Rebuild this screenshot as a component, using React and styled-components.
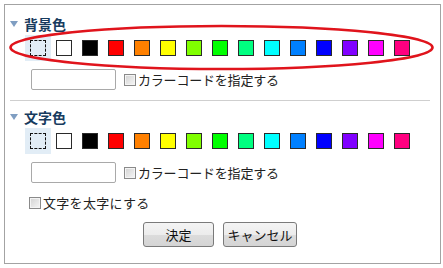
import React, { useState } from 'react';
import styled, { createGlobalStyle } from 'styled-components';

const GlobalStyle = createGlobalStyle`
  html, body {
    margin: 0;
    padding: 0;
    background: #fff;
  }
  * {
    box-sizing: border-box;
  }
  body {
    font-family: "Noto Sans CJK JP", "Noto Sans", sans-serif;
    color: #222;
  }
`;

const Page = styled.div`
  position: relative;
  width: 443px;
  height: 268px;
  padding: 4px 0 0 4px;
`;

const Frame = styled.div`
  width: 437px;
  height: 260px;
  border: 1px solid #a3a3a3;
  padding-top: 10px;
  display: flex;
  flex-direction: column;
`;

const Heading = styled.div`
  display: flex;
  align-items: center;
  gap: 6px;
  height: 18px;
  padding-left: 5px;
  font-size: 14px;
  font-weight: bold;
  line-height: 18px;
  color: #173b5e;
  margin-top: ${p => p.$top || 0}px;
`;

const Arrow = styled.span`
  width: 0;
  height: 0;
  border-left: 4px solid transparent;
  border-right: 4px solid transparent;
  border-top: 6px solid #7f9ec2;
`;

const SwatchRow = styled.div`
  display: flex;
  padding-left: 20px;
  margin-top: 2px;
`;

const Cell = styled.div`
  width: 26px;
  height: 26px;
  display: flex;
  align-items: center;
  justify-content: center;
  background: ${p => (p.$selected ? '#e2edf6' : 'transparent')};
  cursor: pointer;
`;

const Swatch = styled.span`
  width: 16px;
  height: 16px;
  background: ${p => p.$color || 'transparent'};
  border: 1px ${p => (p.$color ? 'solid' : 'dashed')} ${p => (p.$color ? '#2a2a2a' : '#111')};
`;

const CodeRow = styled.div`
  display: flex;
  align-items: center;
  gap: 8px;
  padding-left: 26px;
  margin-top: 8px;
  height: 21px;
`;

const CodeInput = styled.input`
  width: 85px;
  height: 21px;
  border: 1px solid #a9a9a9;
  border-radius: 2px;
  padding: 0 3px;
  font-size: 13px;
  outline: none;
`;

const Check = styled.label`
  display: flex;
  align-items: center;
  gap: 2px;
  font-size: 13px;
  letter-spacing: ${p => p.$tight ? '-0.2px' : '0.3px'};
  line-height: 18px;
  color: #222;
  cursor: pointer;
`;

const Box = styled.input.attrs({ type: 'checkbox' })`
  appearance: none;
  margin: 0;
  width: 12px;
  height: 12px;
  border: 1px solid #8a8a8a;
  background: linear-gradient(135deg, #d2d2d2 0%, #e6e6e6 55%, #f6f6f6 100%);
  box-shadow: inset 0 0 0 1px #f4f4f4;
  flex: none;
  &:checked {
    background: #fff;
  }
`;

const Divider = styled.div`
  height: 1px;
  background: #cfcfcf;
  margin: 10px 10px 0 5px;
`;

const BoldRow = styled.div`
  padding-left: 24px;
  margin-top: 11px;
  height: 18px;
  display: flex;
`;

const Buttons = styled.div`
  display: flex;
  justify-content: center;
  gap: 9px;
  margin-top: 10px;
  padding-right: 5px;
`;

const Button = styled.button`
  width: ${p => p.$w}px;
  height: 25px;
  border: 1px solid #7a7a7a;
  border-radius: 3px;
  background: linear-gradient(#f4f4f4 0%, #ececec 50%, #dcdcdc 51%, #d4d4d4 100%);
  font-family: "Noto Sans CJK JP", sans-serif;
  font-size: 13px;
  color: #111;
  padding: 0;
  cursor: pointer;
`;

const Mark = styled.svg`
  position: absolute;
  left: 0;
  top: 0;
  pointer-events: none;
`;

const COLORS = [
  null, '#ffffff', '#000000', '#ff0000', '#ff8000', '#ffff00', '#80ff00',
  '#00ff00', '#00ff80', '#00ffff', '#0080ff', '#0000ff', '#8000ff',
  '#ff00ff', '#ff0080',
];

function Palette({ value, onPick }) {
  return (
    <SwatchRow>
      {COLORS.map((c, i) => (
        <Cell key={i} $selected={value === i} onClick={() => onPick(i)}>
          <Swatch $color={c} />
        </Cell>
      ))}
    </SwatchRow>
  );
}

function ColorSection({ title, top, value, onPick }) {
  return (
    <>
      <Heading $top={top}>
        <Arrow />
        {title}
      </Heading>
      <Palette value={value} onPick={onPick} />
      <CodeRow>
        <CodeInput type="text" />
        <Check $tight>
          <Box />
          カラーコードを指定する
        </Check>
      </CodeRow>
    </>
  );
}

export default function App() {
  const [bg, setBg] = useState(0);
  const [fg, setFg] = useState(0);

  return (
    <Page>
      <GlobalStyle />
      <Frame>
        <ColorSection title="背景色" value={bg} onPick={setBg} />
        <Divider />
        <ColorSection title="文字色" top={7} value={fg} onPick={setFg} />
        <BoldRow>
          <Check>
            <Box />
            文字を太字にする
          </Check>
        </BoldRow>
        <Buttons>
          <Button $w={71}>決定</Button>
          <Button $w={74}>キャンセル</Button>
        </Buttons>
      </Frame>
      <Mark width="443" height="268">
        <ellipse cx="221.5" cy="47.5" rx="211" ry="21.5" fill="none" stroke="#e0141c" strokeWidth="2.6" />
      </Mark>
    </Page>
  );
}
